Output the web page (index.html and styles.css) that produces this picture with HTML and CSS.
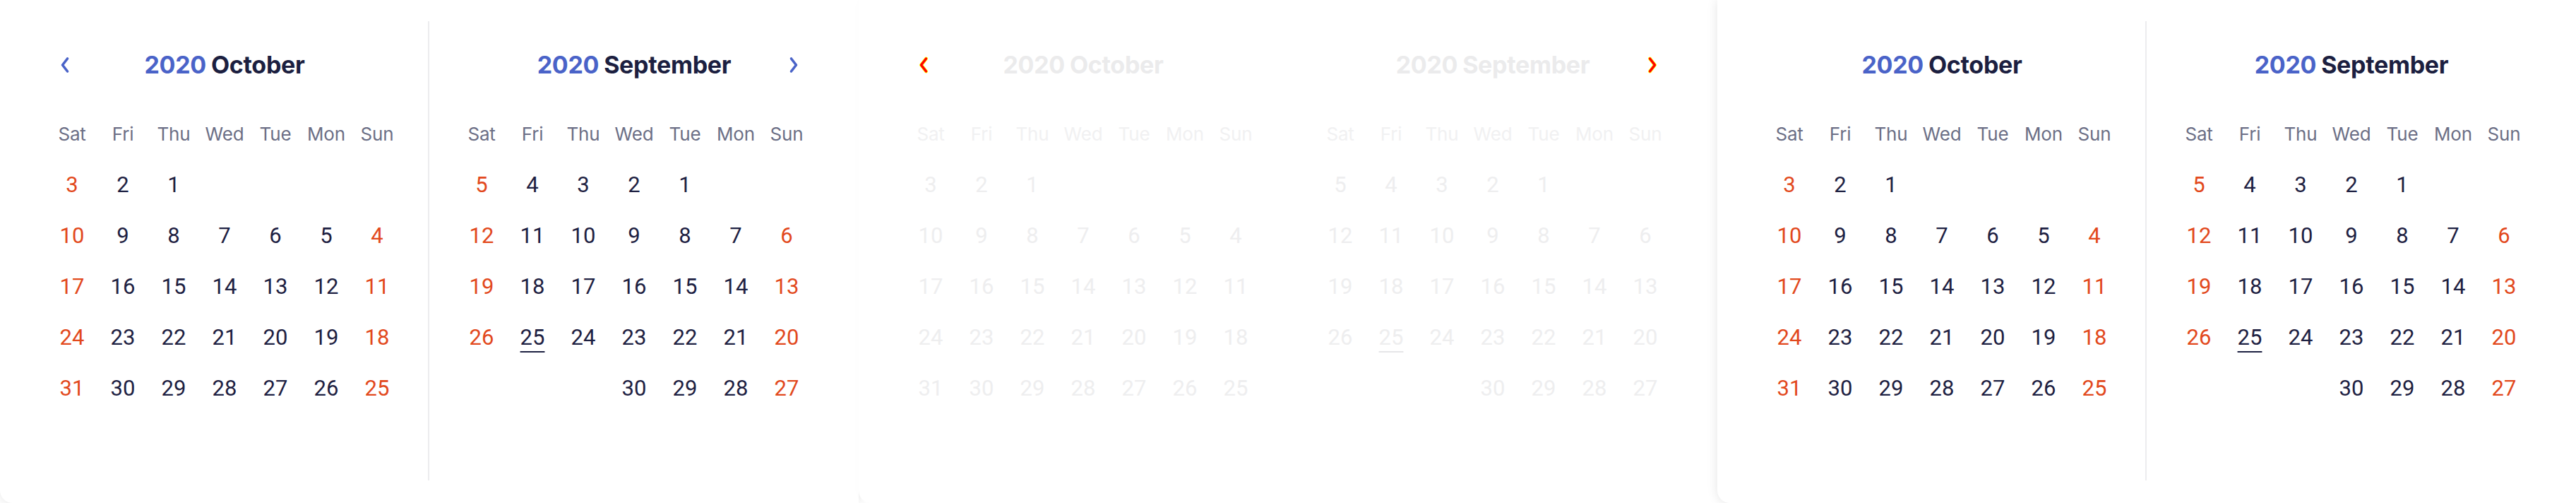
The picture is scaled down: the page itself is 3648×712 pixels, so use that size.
FILE: index.html
```html
<!DOCTYPE html>
<html lang="en">
<head>
<meta charset="utf-8">
<title>Calendars</title>
<link rel="stylesheet" href="styles.css">
</head>
<body>
<div class="page">

  <section class="card">
    <div class="col first">
      <div class="head">
        <span class="nav"><svg class="chev blue" viewBox="0 0 16 24" width="16" height="24"><path d="M11.5 3 L4.5 12 L11.5 21"/></svg></span>
        <h2 class="title"><span class="yr">2020</span><span class="mo">October</span></h2>
        <span class="nav"></span>
      </div>
      <div class="grid">
        <span class="wd">Sat</span><span class="wd">Fri</span><span class="wd">Thu</span><span class="wd">Wed</span><span class="wd">Tue</span><span class="wd">Mon</span><span class="wd">Sun</span>
        <span class="d w">3</span><span class="d">2</span><span class="d">1</span><span class="d"></span><span class="d"></span><span class="d"></span><span class="d"></span>
        <span class="d w">10</span><span class="d">9</span><span class="d">8</span><span class="d">7</span><span class="d">6</span><span class="d">5</span><span class="d w">4</span>
        <span class="d w">17</span><span class="d">16</span><span class="d">15</span><span class="d">14</span><span class="d">13</span><span class="d">12</span><span class="d w">11</span>
        <span class="d w">24</span><span class="d">23</span><span class="d">22</span><span class="d">21</span><span class="d">20</span><span class="d">19</span><span class="d w">18</span>
        <span class="d w">31</span><span class="d">30</span><span class="d">29</span><span class="d">28</span><span class="d">27</span><span class="d">26</span><span class="d w">25</span>
      </div>
    </div>
    <div class="col">
      <div class="head">
        <span class="nav"></span>
        <h2 class="title"><span class="yr">2020</span><span class="mo">September</span></h2>
        <span class="nav"><svg class="chev blue" viewBox="0 0 16 24" width="16" height="24"><path d="M4.5 3 L11.5 12 L4.5 21"/></svg></span>
      </div>
      <div class="grid">
        <span class="wd">Sat</span><span class="wd">Fri</span><span class="wd">Thu</span><span class="wd">Wed</span><span class="wd">Tue</span><span class="wd">Mon</span><span class="wd">Sun</span>
        <span class="d w">5</span><span class="d">4</span><span class="d">3</span><span class="d">2</span><span class="d">1</span><span class="d"></span><span class="d"></span>
        <span class="d w">12</span><span class="d">11</span><span class="d">10</span><span class="d">9</span><span class="d">8</span><span class="d">7</span><span class="d w">6</span>
        <span class="d w">19</span><span class="d">18</span><span class="d">17</span><span class="d">16</span><span class="d">15</span><span class="d">14</span><span class="d w">13</span>
        <span class="d w">26</span><span class="d"><u class="today">25</u></span><span class="d">24</span><span class="d">23</span><span class="d">22</span><span class="d">21</span><span class="d w">20</span>
        <span class="d"></span><span class="d"></span><span class="d"></span><span class="d">30</span><span class="d">29</span><span class="d">28</span><span class="d w">27</span>
      </div>
    </div>
  </section>

  <section class="card ghost">
    <div class="col first">
      <div class="head">
        <span class="nav"><svg class="chev red" viewBox="0 0 16 24" width="16" height="24"><path class="edge" d="M11.5 3 L4.5 12 L11.5 21"/><path d="M11.5 3 L4.5 12 L11.5 21"/></svg></span>
        <h2 class="title"><span class="yr">2020</span><span class="mo">October</span></h2>
        <span class="nav"></span>
      </div>
      <div class="grid">
        <span class="wd">Sat</span><span class="wd">Fri</span><span class="wd">Thu</span><span class="wd">Wed</span><span class="wd">Tue</span><span class="wd">Mon</span><span class="wd">Sun</span>
        <span class="d w">3</span><span class="d">2</span><span class="d">1</span><span class="d"></span><span class="d"></span><span class="d"></span><span class="d"></span>
        <span class="d w">10</span><span class="d">9</span><span class="d">8</span><span class="d">7</span><span class="d">6</span><span class="d">5</span><span class="d w">4</span>
        <span class="d w">17</span><span class="d">16</span><span class="d">15</span><span class="d">14</span><span class="d">13</span><span class="d">12</span><span class="d w">11</span>
        <span class="d w">24</span><span class="d">23</span><span class="d">22</span><span class="d">21</span><span class="d">20</span><span class="d">19</span><span class="d w">18</span>
        <span class="d w">31</span><span class="d">30</span><span class="d">29</span><span class="d">28</span><span class="d">27</span><span class="d">26</span><span class="d w">25</span>
      </div>
    </div>
    <div class="col">
      <div class="head">
        <span class="nav"></span>
        <h2 class="title"><span class="yr">2020</span><span class="mo">September</span></h2>
        <span class="nav"><svg class="chev red" viewBox="0 0 16 24" width="16" height="24"><path class="edge" d="M4.5 3 L11.5 12 L4.5 21"/><path d="M4.5 3 L11.5 12 L4.5 21"/></svg></span>
      </div>
      <div class="grid">
        <span class="wd">Sat</span><span class="wd">Fri</span><span class="wd">Thu</span><span class="wd">Wed</span><span class="wd">Tue</span><span class="wd">Mon</span><span class="wd">Sun</span>
        <span class="d w">5</span><span class="d">4</span><span class="d">3</span><span class="d">2</span><span class="d">1</span><span class="d"></span><span class="d"></span>
        <span class="d w">12</span><span class="d">11</span><span class="d">10</span><span class="d">9</span><span class="d">8</span><span class="d">7</span><span class="d w">6</span>
        <span class="d w">19</span><span class="d">18</span><span class="d">17</span><span class="d">16</span><span class="d">15</span><span class="d">14</span><span class="d w">13</span>
        <span class="d w">26</span><span class="d"><u class="today">25</u></span><span class="d">24</span><span class="d">23</span><span class="d">22</span><span class="d">21</span><span class="d w">20</span>
        <span class="d"></span><span class="d"></span><span class="d"></span><span class="d">30</span><span class="d">29</span><span class="d">28</span><span class="d w">27</span>
      </div>
    </div>
  </section>

  <section class="card">
    <div class="col first">
      <div class="head">
        <span class="nav"></span>
        <h2 class="title"><span class="yr">2020</span><span class="mo">October</span></h2>
        <span class="nav"></span>
      </div>
      <div class="grid">
        <span class="wd">Sat</span><span class="wd">Fri</span><span class="wd">Thu</span><span class="wd">Wed</span><span class="wd">Tue</span><span class="wd">Mon</span><span class="wd">Sun</span>
        <span class="d w">3</span><span class="d">2</span><span class="d">1</span><span class="d"></span><span class="d"></span><span class="d"></span><span class="d"></span>
        <span class="d w">10</span><span class="d">9</span><span class="d">8</span><span class="d">7</span><span class="d">6</span><span class="d">5</span><span class="d w">4</span>
        <span class="d w">17</span><span class="d">16</span><span class="d">15</span><span class="d">14</span><span class="d">13</span><span class="d">12</span><span class="d w">11</span>
        <span class="d w">24</span><span class="d">23</span><span class="d">22</span><span class="d">21</span><span class="d">20</span><span class="d">19</span><span class="d w">18</span>
        <span class="d w">31</span><span class="d">30</span><span class="d">29</span><span class="d">28</span><span class="d">27</span><span class="d">26</span><span class="d w">25</span>
      </div>
    </div>
    <div class="col">
      <div class="head">
        <span class="nav"></span>
        <h2 class="title"><span class="yr">2020</span><span class="mo">September</span></h2>
        <span class="nav"></span>
      </div>
      <div class="grid">
        <span class="wd">Sat</span><span class="wd">Fri</span><span class="wd">Thu</span><span class="wd">Wed</span><span class="wd">Tue</span><span class="wd">Mon</span><span class="wd">Sun</span>
        <span class="d w">5</span><span class="d">4</span><span class="d">3</span><span class="d">2</span><span class="d">1</span><span class="d"></span><span class="d"></span>
        <span class="d w">12</span><span class="d">11</span><span class="d">10</span><span class="d">9</span><span class="d">8</span><span class="d">7</span><span class="d w">6</span>
        <span class="d w">19</span><span class="d">18</span><span class="d">17</span><span class="d">16</span><span class="d">15</span><span class="d">14</span><span class="d w">13</span>
        <span class="d w">26</span><span class="d"><u class="today">25</u></span><span class="d">24</span><span class="d">23</span><span class="d">22</span><span class="d">21</span><span class="d w">20</span>
        <span class="d"></span><span class="d"></span><span class="d"></span><span class="d">30</span><span class="d">29</span><span class="d">28</span><span class="d w">27</span>
      </div>
    </div>
  </section>

</div>
</body>
</html>
```

FILE: styles.css
```css
html, body {
  margin: 0;
  padding: 0;
  background: #ffffff;
  overflow: hidden;
}

.page {
  display: flex;
  width: 3648px;
  height: 712px;
}

.card {
  flex: 0 0 1216px;
  height: 712px;
  box-sizing: border-box;
  padding: 30px 28px 32px;
  display: flex;
  background: #ffffff;
  border-radius: 0 0 0 18px;
  box-shadow: 0 0 16px rgba(0, 0, 0, 0.11);
}

.card.ghost {
  box-shadow: 0 0 16px rgba(0, 0, 0, 0.015);
}

.col {
  width: 580px;
  box-sizing: border-box;
  padding: 26px 38px 0;
  display: flex;
  flex-direction: column;
}

.col.first {
  padding-right: 36px;
  border-right: 2px solid #ececee;
}

.ghost .col.first {
  border-right-color: #ffffff;
}

.head {
  height: 72px;
  margin-bottom: 25px;
  display: flex;
  align-items: center;
}

.nav {
  flex: 0 0 52px;
  height: 52px;
  display: flex;
  align-items: center;
  justify-content: center;
}

.chev {
  display: block;
  fill: none;
  stroke-linecap: round;
  stroke-linejoin: round;
}

.chev.blue path {
  stroke: #4a63c8;
  stroke-width: 3.6;
}

.chev.red path {
  stroke: #ff0000;
  stroke-width: 3.4;
}

.chev.red path.edge {
  stroke: #ffff00;
  stroke-width: 4.8;
}

.title {
  flex: 1;
  margin: 0;
  text-align: center;
  font-family: Inter, "Noto Sans", sans-serif;
  font-weight: 700;
  font-size: 34px;
  line-height: 40px;
  letter-spacing: -0.3px;
  white-space: nowrap;
}

.yr {
  color: #4a63c8;
  margin-right: 7px;
}

.mo {
  color: #1c1f40;
}

.grid {
  display: grid;
  grid-template-columns: repeat(7, 72px);
  grid-auto-rows: 72px;
}

.wd, .d {
  display: flex;
  align-items: center;
  justify-content: center;
}

.wd {
  font-family: Inter, "Noto Sans", sans-serif;
  font-size: 26px;
  color: #6c6f86;
  letter-spacing: -0.2px;
}

.d {
  font-family: Roboto, "Noto Sans", sans-serif;
  font-size: 31px;
  color: #1e2142;
}

.d.w {
  color: #e2491d;
}

.today {
  text-decoration: underline;
  text-decoration-thickness: 2px;
  text-underline-offset: 9px;
  text-decoration-color: #1e2142;
}

.ghost .title .yr,
.ghost .title .mo {
  color: #ebebec;
}

.ghost .wd {
  color: #f1f1f2;
}

.ghost .d,
.ghost .d.w {
  color: #eeeeef;
}

.ghost .today {
  text-decoration-color: #e6e6e8;
}
```
